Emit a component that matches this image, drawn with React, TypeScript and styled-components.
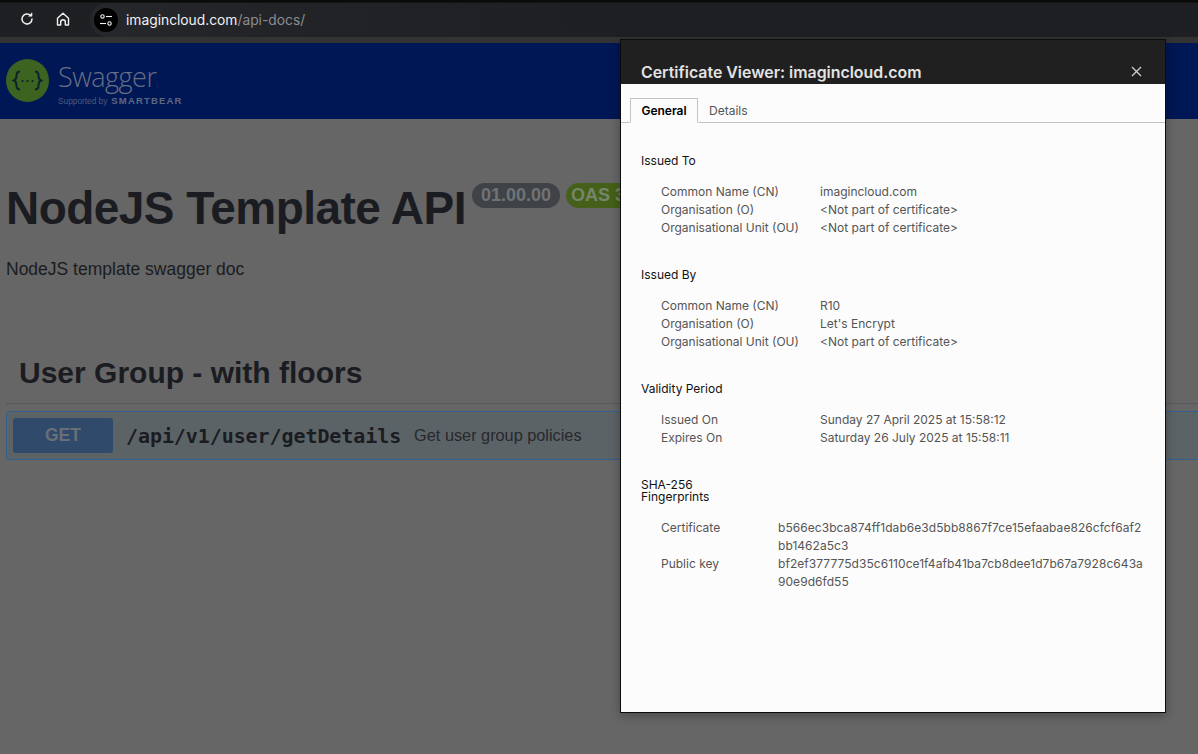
import React from 'react';
import styled, { createGlobalStyle } from 'styled-components';

const Global = createGlobalStyle`
  html, body { margin: 0; padding: 0; background: #666666; }
  body { width: 1198px; height: 754px; overflow: hidden; font-family: "Liberation Sans", Arial, sans-serif; }
`;

const Page = styled.div`
  position: relative;
  width: 1198px;
  height: 754px;
  overflow: hidden;
  background: #666666;
`;

const Toolbar = styled.div`
  height: 37px;
  box-sizing: border-box;
  padding-left: 19px;
  display: flex;
  align-items: center;
  gap: 20px;
  background: linear-gradient(#0a0a0b 0, #0a0a0b 2px, #1e1f22 3px, #1f2023 100%);
`;

const ToolIcon = styled.svg`
  width: 16px;
  height: 16px;
  flex: none;
`;

const AddressBar = styled.div`
  margin-left: -1px;
  width: 470px;
  height: 34px;
  margin-top: 2px;
  border-radius: 17px 0 0 17px;
  background: linear-gradient(90deg, #26272b, #222327 40%, #1f2023 100%);
  display: flex;
  align-items: center;
  padding-left: 4px;
  gap: 8px;
`;

const TuneBadge = styled.div`
  width: 24px;
  height: 24px;
  border-radius: 50%;
  background: #000;
  display: flex;
  align-items: center;
  justify-content: center;
`;

const Url = styled.div`
  font-family: Inter, sans-serif;
  font-size: 13.8px;
  color: #f1f1f2;
  span { color: #8b8c90; }
`;

const SwaggerBar = styled.div`
  height: 76px;
  border-top: 6px solid #333333;
  background: #001755;
  display: flex;
  align-items: center;
  padding-left: 6px;
  gap: 9px;
`;

const LogoCircle = styled.svg`
  width: 43px;
  height: 43px;
  flex: none;
  margin-top: -1px;
`;

const LogoText = styled.div`
  display: flex;
  flex-direction: column;
  margin-top: 6px;
`;

const LogoName = styled.div`
  font-family: "Open Sans", sans-serif;
  font-size: 27px;
  line-height: 30px;
  letter-spacing: -0.5px;
  font-weight: 300;
  color: #666e84;
  small { font-size: 8px; letter-spacing: 0; }
`;

const LogoSub = styled.div`
  display: flex;
  align-items: baseline;
  gap: 4px;
  font-size: 8.3px;
  line-height: 10px;
  margin-top: -3px;
  color: #4f5a7b;
  b { font-size: 9.5px; font-weight: 700; letter-spacing: 1.15px; color: #5f6880; }
`;

const Info = styled.div`
  padding: 62px 0 0 6px;
`;

const TitleRow = styled.div`
  display: flex;
  align-items: flex-start;
  gap: 6px;
`;

const Title = styled.h1`
  margin: 0;
  font-size: 46px;
  line-height: 55px;
  font-weight: 700;
  color: #1b1c22;
  letter-spacing: -0.55px;
`;

const Pill = styled.span<{ $bg: string; $pad: number; $color: string }>`
  margin-top: 2px;
  padding: 0 ${p => p.$pad}px;
  height: 25px;
  line-height: 25px;
  border-radius: 13px;
  background: ${p => p.$bg};
  color: ${p => p.$color};
  font-size: 18px;
  font-weight: 700;
  white-space: nowrap;
`;

const Pills = styled.div`
  display: flex;
  gap: 6px;
`;

const Description = styled.p`
  margin: 23px 0 0;
  font-size: 17.5px;
  line-height: 20px;
  color: #1b1c22;
`;

const Section = styled.div`
  margin-top: 76px;
  padding-left: 6px;
`;

const SectionTitle = styled.h2`
  margin: 0;
  padding: 0 0 12px 13px;
  font-size: 30px;
  line-height: 36px;
  font-weight: 700;
  color: #1b1c22;
  border-bottom: 1px solid #565759;
`;

const Operation = styled.div`
  margin-top: 7px;
  height: 49px;
  box-sizing: border-box;
  border: 1px solid #335f8e;
  border-right: 0;
  border-radius: 4px 0 0 4px;
  background: #5c6366;
  display: flex;
  align-items: center;
  padding-left: 6px;
`;

const Method = styled.div`
  width: 100px;
  height: 35px;
  line-height: 35px;
  border-radius: 3px;
  background: #2f4a6b;
  color: #686f76;
  font-size: 17.5px;
  font-weight: 700;
  text-align: center;
`;

const Path = styled.span`
  margin-left: 13px;
  font-family: "DejaVu Sans Mono", monospace;
  font-weight: 700;
  font-size: 20px;
  color: #1b1c22;
  letter-spacing: -0.08px;
`;

const Summary = styled.span`
  margin-left: 13px;
  font-size: 16.3px;
  color: #27282e;
`;

const Dialog = styled.div`
  position: absolute;
  left: 620px;
  top: 39px;
  width: 546px;
  height: 674px;
  box-sizing: border-box;
  border: 1px solid #0c0c0c;
  background: #fcfcfc;
  box-shadow: 0 2px 10px rgba(0, 0, 0, 0.3);
  display: flex;
  flex-direction: column;
  font-family: Inter, sans-serif;
`;

const DialogHeader = styled.div`
  height: 44px;
  flex: none;
  background: #202020;
  padding: 23px 23px 0 20px;
  box-sizing: border-box;
  display: flex;
  justify-content: space-between;
  align-items: flex-start;
`;

const DialogTitle = styled.div`
  font-size: 15.9px;
  line-height: 20px;
  font-weight: 600;
  color: #e3e3e3;
`;

const CloseIcon = styled.svg`
  width: 11px;
  height: 11px;
  margin-top: 3px;
`;

const Tabs = styled.div`
  flex: none;
  height: 39px;
  box-sizing: border-box;
  padding: 14px 0 0 9px;
  display: flex;
  border-bottom: 1px solid #c4c4c4;
`;

const Tab = styled.div<{ $active?: boolean }>`
  width: ${p => (p.$active ? '68px' : 'auto')};
  height: 25px;
  box-sizing: border-box;
  padding: ${p => (p.$active ? '0' : '1px 0 0 11px')};
  text-align: ${p => (p.$active ? 'center' : 'left')};
  line-height: 24px;
  font-size: 12px;
  font-weight: ${p => (p.$active ? 600 : 400)};
  color: ${p => (p.$active ? '#000' : '#555')};
  ${p =>
    p.$active &&
    `border: 1px solid #c4c4c4; border-bottom: 1px solid #fcfcfc; background: #fcfcfc;`}
`;

const Body = styled.div`
  padding: 32px 20px 0;
`;

const Group = styled.div`
  margin-bottom: 32px;
`;

const GroupTitle = styled.div`
  font-size: 12px;
  line-height: 12px;
  color: #111;
  margin-bottom: 16px;
`;

const Row = styled.div<{ $label?: number }>`
  display: grid;
  grid-template-columns: ${p => p.$label ?? 159}px 1fr;
  padding-left: 20px;
  font-size: 12px;
  line-height: 18px;
  color: #555;
`;

const Mono = styled.div`
  width: 367px;
  word-break: break-all;
  letter-spacing: 0.05px;
`;

const Fingerprint = styled(GroupTitle)`
  width: 70px;
`;

const groups = [
  {
    title: 'Issued To',
    rows: [
      ['Common Name (CN)', 'imagincloud.com'],
      ['Organisation (O)', '<Not part of certificate>'],
      ['Organisational Unit (OU)', '<Not part of certificate>'],
    ],
  },
  {
    title: 'Issued By',
    rows: [
      ['Common Name (CN)', 'R10'],
      ['Organisation (O)', "Let's Encrypt"],
      ['Organisational Unit (OU)', '<Not part of certificate>'],
    ],
  },
  {
    title: 'Validity Period',
    rows: [
      ['Issued On', 'Sunday 27 April 2025 at 15:58:12'],
      ['Expires On', 'Saturday 26 July 2025 at 15:58:11'],
    ],
  },
];

const fingerprints = [
  ['Certificate', 'b566ec3bca874ff1dab6e3d5bb8867f7ce15efaabae826cfcf6af2bb1462a5c3'],
  ['Public key', 'bf2ef377775d35c6110ce1f4afb41ba7cb8dee1d7b67a7928c643a90e9d6fd55'],
];

export default function App() {
  return (
    <Page>
      <Global />
      <Toolbar>
        <ToolIcon viewBox="0 0 16 16" fill="none" stroke="#f2f2f2" strokeWidth="1.5">
          <path d="M13 8a5 5 0 1 1-1.6-3.7" strokeLinecap="round" />
          <path d="M13 1.8v3.4H9.6z" fill="#f2f2f2" strokeWidth="0.6" />
        </ToolIcon>
        <ToolIcon viewBox="0 0 16 16" fill="none" stroke="#f2f2f2" strokeWidth="1.4" strokeLinejoin="round">
          <path d="M2.5 7.200 8 2.200l5.500 5V14h-3.200v-3a2.300 2.300 0 0 0-4.600 0v3H2.500z" />
        </ToolIcon>
        <AddressBar>
          <TuneBadge>
            <svg width="14" height="14" viewBox="0 0 14 14" fill="none" stroke="#f2f2f2" strokeWidth="1.1">
              <circle cx="3.500" cy="3.500" r="1.700" />
              <path d="M7 3.500h6" />
              <path d="M1 10.500h6" />
              <circle cx="10.500" cy="10.500" r="1.700" />
            </svg>
          </TuneBadge>
          <Url>
            imagincloud.com<span>/api-docs/</span>
          </Url>
        </AddressBar>
      </Toolbar>
      <SwaggerBar>
        <LogoCircle viewBox="0 0 43 43">
          <circle cx="21.500" cy="21.500" r="21.500" fill="#3d6320" />
          <g fill="none" stroke="#10222a" strokeWidth="2">
            <path d="M14 12.500c-3 0-3.500 1.500-3.500 4s0 4-2.500 5c2.500 1 2.500 2.500 2.500 5s.5 4 3.500 4" />
            <path d="M29 12.500c3 0 3.500 1.500 3.500 4s0 4 2.500 5c-2.500 1-2.500 2.500-2.500 5s-.5 4-3.500 4" />
          </g>
          <g fill="#10222a">
            <circle cx="16.500" cy="22" r="1.100" />
            <circle cx="21.500" cy="22" r="1.100" />
            <circle cx="26.500" cy="22" r="1.100" />
          </g>
        </LogoCircle>
        <LogoText>
          <LogoName>
            Swagger<small>.</small>
          </LogoName>
          <LogoSub>
            Supported by <b>SMARTBEAR</b>
          </LogoSub>
        </LogoText>
      </SwaggerBar>
      <Info>
        <TitleRow>
          <Title>NodeJS Template API</Title>
          <Pills>
            <Pill $bg="#3f4347" $pad={9} $color="#6f7376">01.00.00</Pill>
            <Pill $bg="#456018" $pad={5} $color="#76856a">OAS 3.0</Pill>
          </Pills>
        </TitleRow>
        <Description>NodeJS template swagger doc</Description>
      </Info>
      <Section>
        <SectionTitle>User Group - with floors</SectionTitle>
        <Operation>
          <Method>GET</Method>
          <Path>/api/v1/user/getDetails</Path>
          <Summary>Get user group policies</Summary>
        </Operation>
      </Section>
      <Dialog>
        <DialogHeader>
          <DialogTitle>Certificate Viewer: imagincloud.com</DialogTitle>
          <CloseIcon viewBox="0 0 11 11" stroke="#d0d0d0" strokeWidth="1.300">
            <path d="M1 1l9 9M10 1l-9 9" />
          </CloseIcon>
        </DialogHeader>
        <Tabs>
          <Tab $active>General</Tab>
          <Tab>Details</Tab>
        </Tabs>
        <Body>
          {groups.map(g => (
            <Group key={g.title}>
              <GroupTitle>{g.title}</GroupTitle>
              {g.rows.map(([label, value]) => (
                <Row key={label}>
                  <span>{label}</span>
                  <span>{value}</span>
                </Row>
              ))}
            </Group>
          ))}
          <Fingerprint>SHA-256 Fingerprints</Fingerprint>
          {fingerprints.map(([label, value]) => (
            <Row key={label} $label={117}>
              <span>{label}</span>
              <Mono>{value}</Mono>
            </Row>
          ))}
        </Body>
      </Dialog>
    </Page>
  );
}
